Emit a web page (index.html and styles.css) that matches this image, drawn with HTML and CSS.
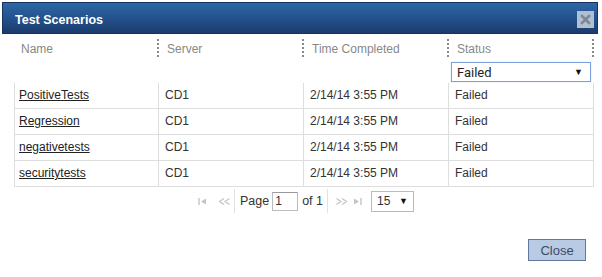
FILE: index.html
```html
<!DOCTYPE html>
<html lang="en">
  <head>
    <meta charset="UTF-8" />
    <meta name="viewport" content="width=device-width, initial-scale=1.0" />
    <title>Test Scenarios</title>
    <link rel="stylesheet" href="styles.css">
  </head>
  <body>
    <div class="dialog">
      <div class="titlebar">
        <span class="title">Test Scenarios</span>
        <span class="tool-close">
          <svg width="11" height="11" viewBox="0 0 11 11">
            <path d="M2 2 L9 9 M9 2 L2 9" stroke="#7d8896" stroke-width="2.6" stroke-linecap="square" />
          </svg>
        </span>
      </div>

      <div class="grid">
        <div class="grid-head">
          <div class="hcell">Name</div>
          <div class="hcell">Server</div>
          <div class="hcell">Time Completed</div>
          <div class="hcell last">Status</div>
        </div>
        <div class="grid-filter">
          <div class="fcell"></div>
          <div class="fcell"></div>
          <div class="fcell"></div>
          <div class="fcell">
            <div class="combo">
              <span>Failed</span>
              <span class="arrow">&#9660;</span>
            </div>
          </div>
        </div>

        <div class="row">
          <div class="cell first"><a href="#">PositiveTests</a></div>
          <div class="cell">CD1</div>
          <div class="cell">2/14/14 3:55 PM</div>
          <div class="cell">Failed</div>
        </div>
        <div class="row">
          <div class="cell first"><a href="#">Regression</a></div>
          <div class="cell">CD1</div>
          <div class="cell">2/14/14 3:55 PM</div>
          <div class="cell">Failed</div>
        </div>
        <div class="row">
          <div class="cell first"><a href="#">negativetests</a></div>
          <div class="cell">CD1</div>
          <div class="cell">2/14/14 3:55 PM</div>
          <div class="cell">Failed</div>
        </div>
        <div class="row">
          <div class="cell first"><a href="#">securitytests</a></div>
          <div class="cell">CD1</div>
          <div class="cell">2/14/14 3:55 PM</div>
          <div class="cell">Failed</div>
        </div>

        <div class="pager">
          <span class="pg-btn pg-first">
            <svg width="9" height="7" viewBox="0 0 9 7"><path d="M1 0 V7" stroke="#c4c4c4" stroke-width="1.4" /><path d="M8 0.5 L3 3.5 L8 6.5 Z" fill="#c4c4c4" /></svg>
          </span>
          <span class="pg-btn pg-prev">
            <svg width="11" height="7" viewBox="0 0 11 7"><path d="M5 0.5 L0.5 3.5 L5 6.5 M10.5 0.5 L6 3.5 L10.5 6.5" stroke="#c4c4c4" stroke-width="1.2" fill="none" /></svg>
          </span>
          <span class="pg-sep"></span>
          <span class="pg-text pg-label">Page</span>
          <span class="pg-input">1</span>
          <span class="pg-text">of 1</span>
          <span class="pg-sep"></span>
          <span class="pg-btn pg-next">
            <svg width="11" height="7" viewBox="0 0 11 7"><path d="M0.5 0.5 L5 3.5 L0.5 6.5 M6 0.5 L10.5 3.5 L6 6.5" stroke="#c4c4c4" stroke-width="1.2" fill="none" /></svg>
          </span>
          <span class="pg-btn pg-last">
            <svg width="9" height="7" viewBox="0 0 9 7"><path d="M1 0.5 L6 3.5 L1 6.5 Z" fill="#c4c4c4" /><path d="M8 0 V7" stroke="#c4c4c4" stroke-width="1.4" /></svg>
          </span>
          <span class="pg-size">
            <span>15</span>
            <span class="arrow">&#9660;</span>
          </span>
        </div>
      </div>

      <div class="footer">
        <button class="btn">Close</button>
      </div>
    </div>
  </body>
</html>
```

FILE: styles.css
```css
* {
  margin: 0;
  padding: 0;
  box-sizing: border-box;
}
body {
  background: #fff;
  font-family: "Liberation Sans", Arial, sans-serif;
  font-size: 12px;
  color: #333;
}
.dialog {
  width: 602px;
  height: 277px;
  display: flex;
  flex-direction: column;
}

/* title bar */
.titlebar {
  margin: 2px 4px 0 2px;
  height: 32px;
  background: linear-gradient(#2c67a6, #23508a 55%, #1b3c6c);
  border: 1px solid #17345e;
  display: flex;
  align-items: center;
  justify-content: space-between;
  padding: 0 3px 0 12px;
}
.title {
  color: #fff;
  font-weight: bold;
  font-size: 12.5px;
  padding-top: 3px;
}
.tool-close {
  width: 17px;
  height: 17px;
  background: #b1bfd2;
  display: flex;
  align-items: center;
  justify-content: center;
  margin-top: 3px;
}

/* grid */
.grid {
  margin: 4px 0 0 14px;
  width: 580px;
}
.grid-head,
.grid-filter {
  display: grid;
  grid-template-columns: 143px 145px 145px 147px;
}
.grid-head {
  height: 22px;
  padding-top: 1px;
}
.hcell {
  height: 18px;
  line-height: 20px;
  color: #888;
  padding-left: 8px;
  border-left: 2px dotted #8a8a8a;
}
.hcell:first-child {
  border-left: none;
  padding-left: 7px;
}
.hcell.last {
  border-right: 2px dotted #8a8a8a;
}
.grid-filter {
  height: 23px;
  padding-top: 2px;
}
.combo {
  margin-left: 4px;
  width: 140px;
  height: 20px;
  border: 1px solid #7ba2dc;
  box-shadow: 0 0 1px #a9c4ec;
  display: flex;
  align-items: center;
  justify-content: space-between;
  padding: 0 7px 0 5px;
  font-family: Roboto, "Liberation Sans", sans-serif;
  font-size: 13px;
  color: #222;
}
.arrow {
  font-size: 9px;
  color: #111;
}

.row {
  display: grid;
  grid-template-columns: 144px 145px 145px 145px;
  height: 26px;
  border-left: 1px solid #dedede;
  border-bottom: 1px solid #dedede;
}
.cell {
  border-right: 1px solid #dedede;
  padding-left: 6px;
  line-height: 25px;
  white-space: nowrap;
}
.cell.first {
  padding-left: 4px;
}
.cell a {
  color: #222;
  text-decoration: underline;
}

/* pager */
.pager {
  height: 28px;
  display: flex;
  align-items: center;
  justify-content: center;
  padding-left: 4px;
}
.pg-btn {
  display: flex;
  align-items: center;
}
.pg-prev {
  margin-left: 12px;
}
.pg-next {
  margin-left: 8px;
}
.pg-last {
  margin-left: 6px;
}
.pg-sep {
  width: 1px;
  height: 24px;
  background: #e2e2e2;
  margin-left: 4px;
}
.pg-label {
  margin-left: 5px;
}
.pg-text {
  font-size: 12.5px;
  color: #333;
}
.pg-input {
  width: 26px;
  height: 19px;
  border: 1px solid #bbb;
  border-top-color: #999;
  margin: 0 4px 0 3px;
  font-size: 12px;
  line-height: 17px;
  padding-left: 2px;
}
.pg-size {
  width: 43px;
  height: 21px;
  border: 1px solid #bbb;
  margin-left: 9px;
  display: flex;
  align-items: center;
  justify-content: space-between;
  padding: 0 5px 0 5px;
  font-size: 12px;
}

/* footer */
.footer {
  margin-top: auto;
  padding: 0 16px 16px 0;
  display: flex;
  justify-content: flex-end;
}
.btn {
  width: 58px;
  height: 22px;
  background: #b9cae4;
  border: 1px solid #62779e;
  color: #3b4a69;
  font-family: "Liberation Sans", Arial, sans-serif;
  font-size: 13px;
}
```
